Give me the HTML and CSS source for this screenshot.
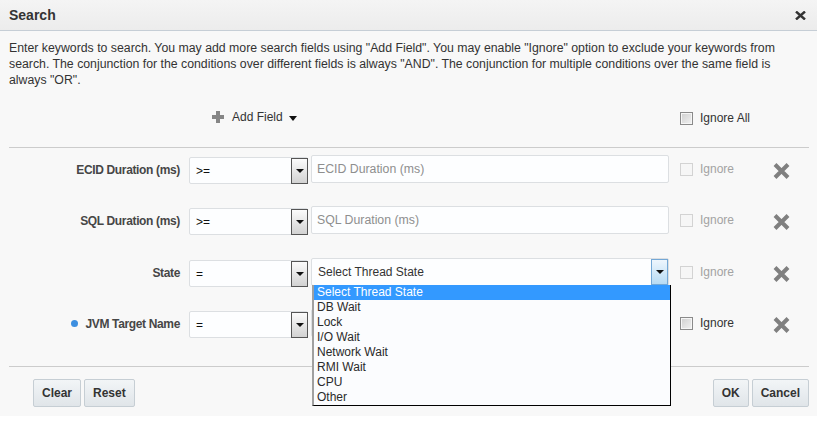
FILE: index.html
```html
<!DOCTYPE html>
<html>
<head>
<meta charset="utf-8">
<link rel="stylesheet" href="styles.css">
</head>
<body>
<div class="dialog">
  <div class="titlebar">
    <span class="title">Search</span>
    <svg class="close" width="11" height="9" viewBox="0 0 11 9"><path d="M1 0.5 L10 8.5 M10 0.5 L1 8.5" stroke="#333" stroke-width="2.4"/></svg>
  </div>
  <div class="content">
    <p class="desc">Enter keywords to search. You may add more search fields using "Add Field". You may enable "Ignore" option to exclude your keywords from search. The conjunction for the conditions over different fields is always "AND". The conjunction for multiple conditions over the same field is always "OR".</p>
    <div class="toolbar">
      <div class="addcell">
        <span class="addfield">
          <svg class="plus" width="12" height="12" viewBox="0 0 12 12"><path d="M4 0h4v4h4v4h-4v4h-4v-4h-4v-4h4z" fill="#868686"/></svg>
          <span class="addtext">Add Field</span>
          <span class="caret"></span>
        </span>
      </div>
      <label class="chk"><span class="box on"></span><span class="chktext">Ignore All</span></label>
    </div>
    <div class="sep"></div>
    <div class="rows">
      <div class="row">
        <div class="lab">ECID Duration (ms)</div>
        <div class="sel"><span class="seltext">&gt;=</span><span class="selbtn"><span class="tri"></span></span></div>
        <div class="inp ph">ECID Duration (ms)</div>
        <label class="chk ign"><span class="box off"></span><span class="chktext dim">Ignore</span></label>
        <svg class="del" width="17" height="16" viewBox="0 0 17 16"><path d="M2 1.5 L15 14.5 M15 1.5 L2 14.5" stroke="#808080" stroke-width="4"/></svg>
      </div>
      <div class="row">
        <div class="lab">SQL Duration (ms)</div>
        <div class="sel"><span class="seltext">&gt;=</span><span class="selbtn"><span class="tri"></span></span></div>
        <div class="inp ph">SQL Duration (ms)</div>
        <label class="chk ign"><span class="box off"></span><span class="chktext dim">Ignore</span></label>
        <svg class="del" width="17" height="16" viewBox="0 0 17 16"><path d="M2 1.5 L15 14.5 M15 1.5 L2 14.5" stroke="#808080" stroke-width="4"/></svg>
      </div>
      <div class="row row3">
        <div class="lab">State</div>
        <div class="sel"><span class="seltext">=</span><span class="selbtn"><span class="tri"></span></span></div>
        <div class="inp combo">
          <span class="combotext">Select Thread State</span>
          <span class="combobtn"><span class="tri"></span></span>
          <ul class="list">
            <li class="hl">Select Thread State</li>
            <li>DB Wait</li>
            <li>Lock</li>
            <li>I/O Wait</li>
            <li>Network Wait</li>
            <li>RMI Wait</li>
            <li>CPU</li>
            <li>Other</li>
          </ul>
        </div>
        <label class="chk ign"><span class="box off"></span><span class="chktext dim">Ignore</span></label>
        <svg class="del" width="17" height="16" viewBox="0 0 17 16"><path d="M2 1.5 L15 14.5 M15 1.5 L2 14.5" stroke="#808080" stroke-width="4"/></svg>
      </div>
      <div class="row">
        <div class="lab"><span class="dot"></span>JVM Target Name</div>
        <div class="sel"><span class="seltext">=</span><span class="selbtn"><span class="tri"></span></span></div>
        <div class="inp"></div>
        <label class="chk ign"><span class="box on"></span><span class="chktext">Ignore</span></label>
        <svg class="del" width="17" height="16" viewBox="0 0 17 16"><path d="M2 1.5 L15 14.5 M15 1.5 L2 14.5" stroke="#808080" stroke-width="4"/></svg>
      </div>
    </div>
    <div class="sep sep2"></div>
    <div class="footer">
      <div class="btns">
        <button class="btn">Clear</button>
        <button class="btn">Reset</button>
      </div>
      <div class="btns">
        <button class="btn">OK</button>
        <button class="btn">Cancel</button>
      </div>
    </div>
  </div>
</div>
</body>
</html>
```

FILE: styles.css
```css
html, body {
  margin: 0;
  padding: 0;
  background: #ffffff;
}
body {
  font-family: "Liberation Sans", Arial, sans-serif;
  font-size: 12px;
  color: #333333;
}
.dialog {
  width: 817px;
  height: 416px;
  background: #f8f8f8;
}
.titlebar {
  height: 30px;
  border-bottom: 1px solid #c6ced6;
  background: linear-gradient(#f4f4f4, #ececec);
  display: flex;
  align-items: center;
  justify-content: space-between;
  padding: 0 11px 0 9px;
}
.title {
  font-weight: bold;
  font-size: 14px;
  color: #333333;
}
.close {
  display: block;
}
.content {
  padding: 0 8px 0 9px;
}
.desc {
  margin: 0;
  padding: 9px 12px 0 0;
  font-size: 12.3px;
  line-height: 16px;
  color: #333333;
}
.toolbar {
  margin-top: 16px;
  height: 28px;
  display: grid;
  grid-template-columns: 671px 1fr;
  align-items: center;
}
.addcell {
  padding-left: 203px;
}
.addfield {
  display: inline-flex;
  align-items: center;
}
.plus {
  display: block;
}
.addtext {
  margin-left: 8px;
  color: #333333;
}
.caret {
  margin-left: 6px;
  margin-top: 2px;
  width: 0;
  height: 0;
  border-left: 4px solid transparent;
  border-right: 4px solid transparent;
  border-top: 5px solid #111111;
}
.chk {
  display: flex;
  align-items: center;
}
.box {
  width: 11px;
  height: 11px;
  display: block;
  box-sizing: content-box;
}
.box.on {
  border: 1px solid #8a8a8a;
  background: linear-gradient(135deg, #cfcfcf, #f2f2f2);
  box-shadow: inset 0 0 0 1px #f6f6f6;
}
.box.off {
  border: 1px solid #d3d3d3;
  background: #f6f6f6;
}
.chktext {
  margin-left: 7px;
  color: #333333;
}
.chktext.dim {
  color: #a3a3a3;
}
.sep {
  height: 1px;
  background: #cccccc;
  margin-top: 15px;
}
.rows {
  margin-top: 7px;
  display: flex;
  flex-direction: column;
  gap: 23px;
}
.row {
  height: 28px;
  display: flex;
  align-items: center;
}
.row3 {
  margin-top: 1px;
}
.lab {
  width: 171px;
  text-align: right;
  font-weight: bold;
  font-size: 12px;
  letter-spacing: -0.35px;
  color: #464646;
  display: flex;
  align-items: center;
  justify-content: flex-end;
  padding-top: 1px;
}
.dot {
  width: 7px;
  height: 7px;
  border-radius: 50%;
  background: #3d8fe0;
  margin-right: 7px;
}
.sel {
  margin-left: 9px;
  width: 119px;
  height: 27px;
  margin-top: 3px;
  box-sizing: border-box;
  border: 1px solid #dcdfe2;
  border-radius: 2px;
  background: #fdfeff;
  display: flex;
  align-items: center;
  position: relative;
}
.seltext {
  padding-left: 6px;
  color: #111111;
}
.selbtn {
  position: absolute;
  right: -1px;
  top: 0;
  bottom: -1px;
  width: 15px;
  border: 1px solid #555555;
  background: linear-gradient(#fbfbfb, #d2d2d2);
  display: flex;
  align-items: center;
  justify-content: center;
}
.tri {
  width: 0;
  height: 0;
  border-left: 4px solid transparent;
  border-right: 4px solid transparent;
  border-top: 4px solid #111111;
}
.inp {
  margin-left: 3px;
  width: 358px;
  height: 28px;
  box-sizing: border-box;
  border: 1px solid #dcdfe2;
  border-radius: 2px;
  background: #fdfeff;
  display: flex;
  align-items: center;
  padding-left: 5px;
}
.inp.ph {
  color: #8e8e8e;
  font-size: 12.3px;
}
.combo {
  position: relative;
  padding-left: 6px;
  color: #333333;
}
.combobtn {
  position: absolute;
  right: 0;
  top: 0;
  bottom: 0;
  width: 15px;
  border: 1px solid #74a8d6;
  background: linear-gradient(#eef6fd, #b7dbf4);
  display: flex;
  align-items: center;
  justify-content: center;
}
.list {
  position: absolute;
  left: 0;
  top: 100%;
  margin: 0;
  padding: 0;
  list-style: none;
  width: 359px;
  box-sizing: border-box;
  border-left: 2px solid #a0a0a0;
  border-right: 1px solid #000000;
  border-bottom: 1px solid #000000;
  background: #fbfcfe;
  z-index: 5;
}
.list li {
  height: 15px;
  line-height: 15px;
  padding-left: 3px;
  color: #2a2a2a;
}
.list li.hl {
  background: #3399ff;
  color: #ffffff;
}
.ign {
  margin-left: 11px;
  width: 93px;
}
.del {
  display: block;
  margin-top: 3px;
}
.sep2 {
  margin-top: 29px;
}
.footer {
  margin-top: 12px;
  display: flex;
  justify-content: space-between;
  padding-left: 24px;
}
.btns {
  display: flex;
  gap: 3px;
}
.btn {
  height: 28px;
  padding: 0 8px;
  border: 1px solid #c6ced4;
  border-radius: 2px;
  background: linear-gradient(#f2f5f7, #e0e5e9);
  font-family: "Liberation Sans", Arial, sans-serif;
  font-weight: bold;
  font-size: 12px;
  color: #333333;
  margin: 0;
}
```
